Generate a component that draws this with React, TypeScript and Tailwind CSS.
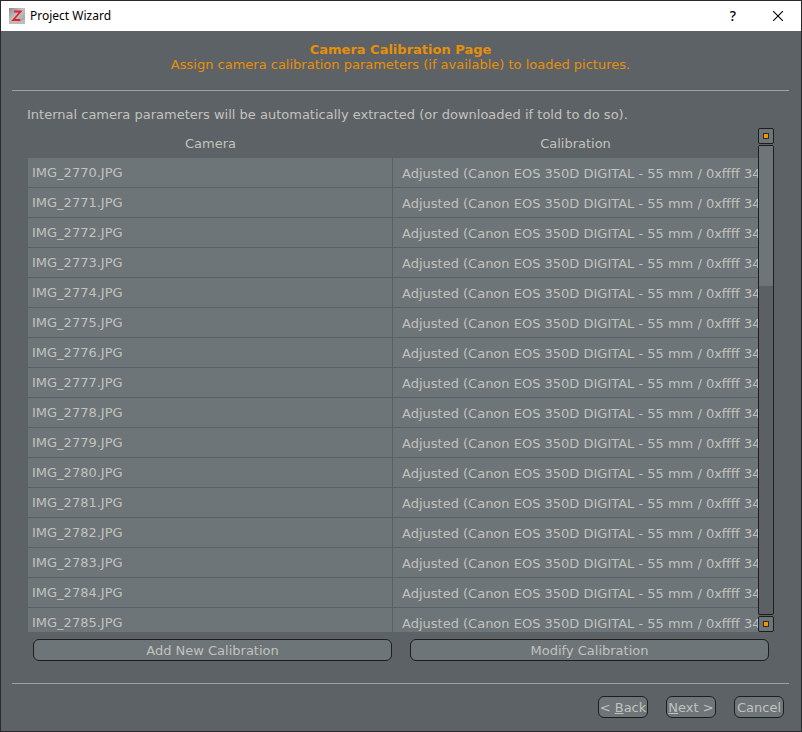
import { useState } from "react";
import type { ReactNode } from "react";

const CALIBRATION = "Adjusted (Canon EOS 350D DIGITAL - 55 mm / 0xffff 3456";

const cameras = Array.from({ length: 16 }, (_, i) => ({
  name: `IMG_${2770 + i}.JPG`,
  calibration: CALIBRATION,
}));

function AppIcon() {
  return (
    <svg viewBox="0 0 16 16" className="size-4" aria-hidden="true">
      <defs>
        <linearGradient id="metal" x1="0" y1="0" x2="1" y2="1">
          <stop offset="0" stopColor="#8a8a8a" />
          <stop offset="0.45" stopColor="#c4c4c4" />
          <stop offset="1" stopColor="#9a9a9a" />
        </linearGradient>
      </defs>
      <rect width="16" height="16" fill="url(#metal)" />
      <path d="M0 13l5-1 4 2 7-3v5H0z" fill="#bcbcbc" />
      <path d="M5 3.5h6.6L4.2 12h7" fill="none" stroke="#e0222e" strokeWidth="1.8" />
    </svg>
  );
}

function PushButton({ children, className }: { children: ReactNode; className: string }) {
  return (
    <button
      type="button"
      className={`h-[22px] rounded-md border border-[#1e1e1e] bg-[#6d7579] pt-0.5 text-center leading-[18px] whitespace-nowrap hover:bg-[#788084] ${className}`}
    >
      {children}
    </button>
  );
}

function ScrollButton({ label }: { label: string }) {
  return (
    <button
      type="button"
      aria-label={label}
      className="flex size-4 shrink-0 items-center justify-center rounded-xs border border-[#1e1e1e] bg-[#6d7579]"
    >
      <span className="size-1.5 border border-[#2c2c2c] bg-[#f29400]" />
    </button>
  );
}

function ScrollBar() {
  return (
    <div className="flex w-4 shrink-0 flex-col gap-px">
      <ScrollButton label="Scroll up" />
      <div className="min-h-0 flex-1 rounded-xs border border-[#1e1e1e] bg-[#5b6064]">
        <div className="h-[30%] bg-[#6d7579]" />
      </div>
      <ScrollButton label="Scroll down" />
    </div>
  );
}

export default function App() {
  const [selected, setSelected] = useState<string | null>(null);

  return (
    <div className="flex h-screen flex-col overflow-hidden border border-[#2a292b] bg-[#5d6266] font-['DejaVu_Sans',Verdana,sans-serif] text-[13px] text-[#c2c2bd]">
      <header className="flex h-[30px] shrink-0 items-center bg-white pl-2 font-['Noto_Sans','Open_Sans',sans-serif] text-black">
        <AppIcon />
        <h1 className="ml-[5px] flex-1 text-xs">Project Wizard</h1>
        <button type="button" aria-label="Help" className="flex h-full w-11 items-center justify-center text-sm font-medium">
          ?
        </button>
        <button type="button" aria-label="Close" className="flex h-full w-[46px] items-center justify-center">
          <svg viewBox="0 0 10 10" className="size-2.5" aria-hidden="true">
            <path d="M0 0L10 10M10 0L0 10" stroke="#000" strokeWidth="1.1" />
          </svg>
        </button>
      </header>

      <div className="mr-3 ml-[11px] shrink-0 border-b border-[#9da0a1] pt-[11px] pb-[18px] text-center leading-[15px] text-[#e88f08]">
        <h2 className="font-bold">Camera Calibration Page</h2>
        <p>Assign camera calibration parameters (if available) to loaded pictures.</p>
      </div>

      <main className="flex min-h-0 flex-1 flex-col px-[27px] pt-4">
        <p className="-ml-px shrink-0 leading-[15px]">
          Internal camera parameters will be automatically extracted (or downloaded if told to do so).
        </p>

        <div className="mt-[6px] flex min-h-0 flex-1">
          <div className="min-w-0 flex-1 overflow-hidden">
            <table className="w-full table-fixed border-separate border-spacing-0">
              <thead>
                <tr className="h-[30px]">
                  <th className="p-0 pt-0.5 font-normal">Camera</th>
                  <th className="p-0 pt-0.5 font-normal">Calibration</th>
                </tr>
              </thead>
              <tbody>
                {cameras.map((c) => (
                  <tr
                    key={c.name}
                    onClick={() => setSelected(c.name)}
                    className={`h-[30px] ${selected === c.name ? "bg-[#7d8589]" : "bg-[#6d7579]"}`}
                  >
                    <td className="border-r border-b border-[#5b6063] p-0 pl-1">{c.name}</td>
                    <td className="overflow-hidden border-b border-[#5b6063] p-0 pt-0.5 pl-[9px] whitespace-nowrap">
                      {c.calibration}
                    </td>
                  </tr>
                ))}
              </tbody>
            </table>
          </div>
          <ScrollBar />
        </div>

        <div className="mt-[7px] flex shrink-0 gap-[18px] px-[5px]">
          <PushButton className="flex-1">Add New Calibration</PushButton>
          <PushButton className="flex-1">Modify Calibration</PushButton>
        </div>
      </main>

      <footer className="mt-[22px] mr-3 ml-[11px] flex shrink-0 justify-end gap-[18px] border-t border-[#9da0a1] pt-3 pr-[5px] pb-[13px]">
        <PushButton className="w-[50px]">
          &lt; <u>B</u>ack
        </PushButton>
        <PushButton className="w-[50px]">
          <u>N</u>ext &gt;
        </PushButton>
        <PushButton className="w-[50px]">Cancel</PushButton>
      </footer>
    </div>
  );
}
